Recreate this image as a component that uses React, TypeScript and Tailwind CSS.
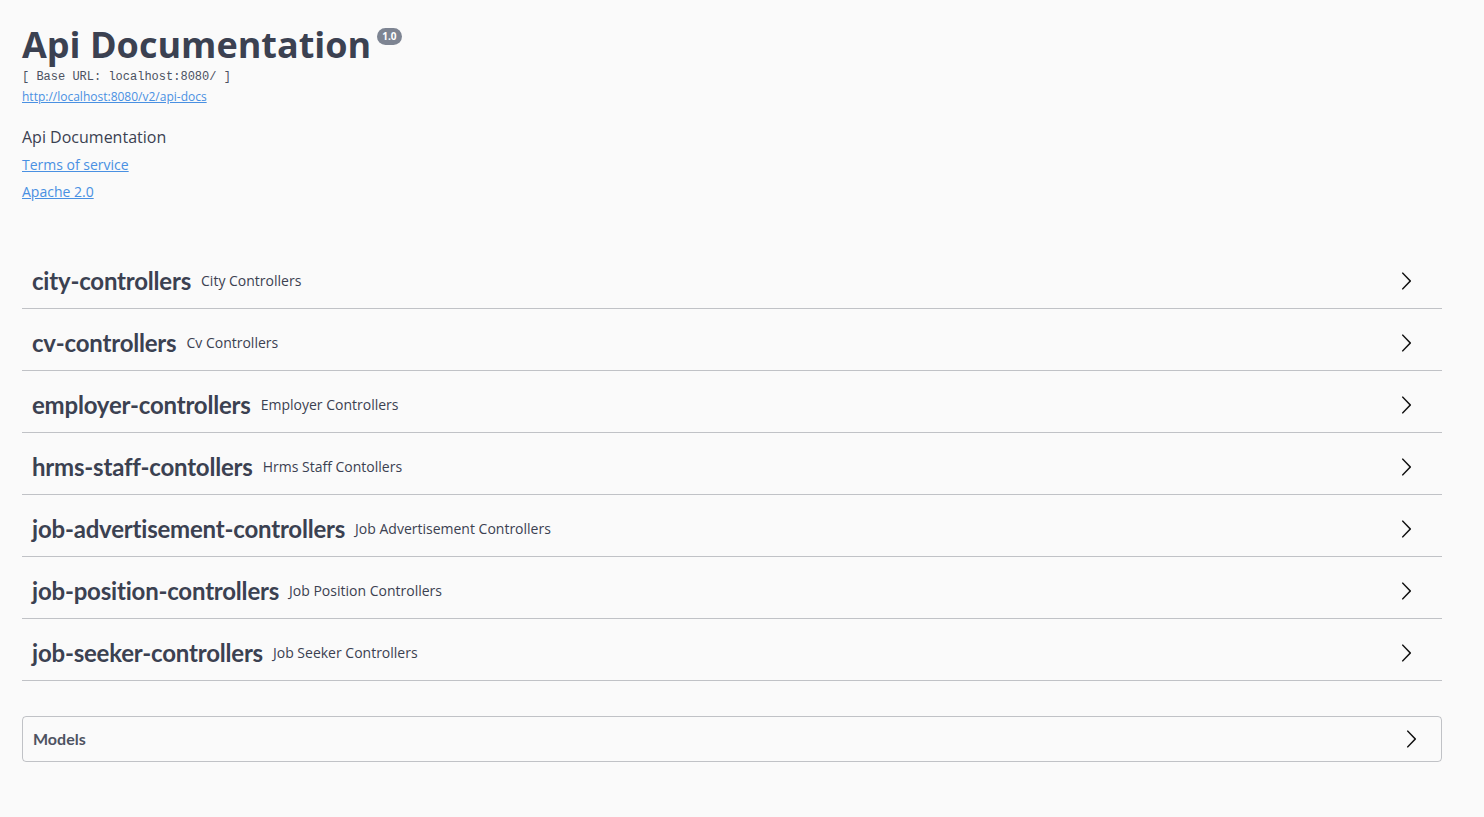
const tags = [
  { name: 'city-controllers', desc: 'City Controllers' },
  { name: 'cv-controllers', desc: 'Cv Controllers' },
  { name: 'employer-controllers', desc: 'Employer Controllers' },
  { name: 'hrms-staff-contollers', desc: 'Hrms Staff Contollers' },
  { name: 'job-advertisement-controllers', desc: 'Job Advertisement Controllers' },
  { name: 'job-position-controllers', desc: 'Job Position Controllers' },
  { name: 'job-seeker-controllers', desc: 'Job Seeker Controllers' },
];

const Arrow = () => (
  <svg width="20" height="20" viewBox="0 0 20 20" className="fill-[#111]">
    <path d="M13.25 10L6.109 2.58c-.268-.27-.268-.707 0-.979.268-.27.701-.27.969 0l7.83 7.908c.268.271.268.709 0 .979l-7.83 7.908c-.268.271-.701.27-.969 0-.268-.269-.268-.707 0-.979L13.25 10z" />
  </svg>
);

const App: React.FC = () => {
  return (
    <div className="min-h-[817px] bg-[#fafafa] text-[#3b4151] font-['Open_Sans',sans-serif]">
      <div className="w-[1420px] ml-[22px]">
        {/* info */}
        <section className="pt-[22px]">
          <div className="flex items-start">
            <h2 className="text-[36px] leading-[46px] font-bold">Api Documentation</h2>
            <span className="ml-[6px] mt-[6px] rounded-full bg-[#7d8492] px-[5px] py-[2px] text-[10px] leading-[13px] font-bold text-white">
              1.0
            </span>
          </div>
          <pre className="mt-[1px] text-[12px] leading-[16px] font-['Liberation_Mono',monospace] text-[#4b5161]">
            [ Base URL: localhost:8080/ ]
          </pre>
          <a href="#" className="mt-[4px] block w-fit text-[12px] leading-[16px] text-[#4990e2] underline">
            http://localhost:8080/v2/api-docs
          </a>
          <p className="mt-[21px] text-[16px] leading-[22px]">Api Documentation</p>
          <a href="#" className="mt-[6px] block w-fit text-[14px] leading-[21px] text-[#4990e2] underline">
            Terms of service
          </a>
          <a href="#" className="mt-[6px] block w-fit text-[14px] leading-[21px] text-[#4990e2] underline">
            Apache 2.0
          </a>
        </section>

        {/* tags */}
        <section className="mt-[45px]">
          {tags.map((t) => (
            <div
              key={t.name}
              className="flex h-[62px] items-center border-b border-[#3b41514d] pl-[10px] pr-[26px] pt-[6px]"
            >
              <span className="font-['Lato',sans-serif] text-[24px] font-bold tracking-[-0.2px]">{t.name}</span>
              <span className="ml-[10px] text-[14px]">{t.desc}</span>
              <span className="ml-auto">
                <Arrow />
              </span>
            </div>
          ))}
        </section>

        {/* models */}
        <section className="mt-[35px] flex h-[46px] items-center rounded-[4px] border border-[#3b41514d] pl-[10px] pr-[20px]">
          <span className="font-['Lato',sans-serif] text-[16px] font-bold text-[#3b4151] opacity-90">Models</span>
          <span className="ml-auto">
            <Arrow />
          </span>
        </section>
      </div>
    </div>
  );
};

export default App;
